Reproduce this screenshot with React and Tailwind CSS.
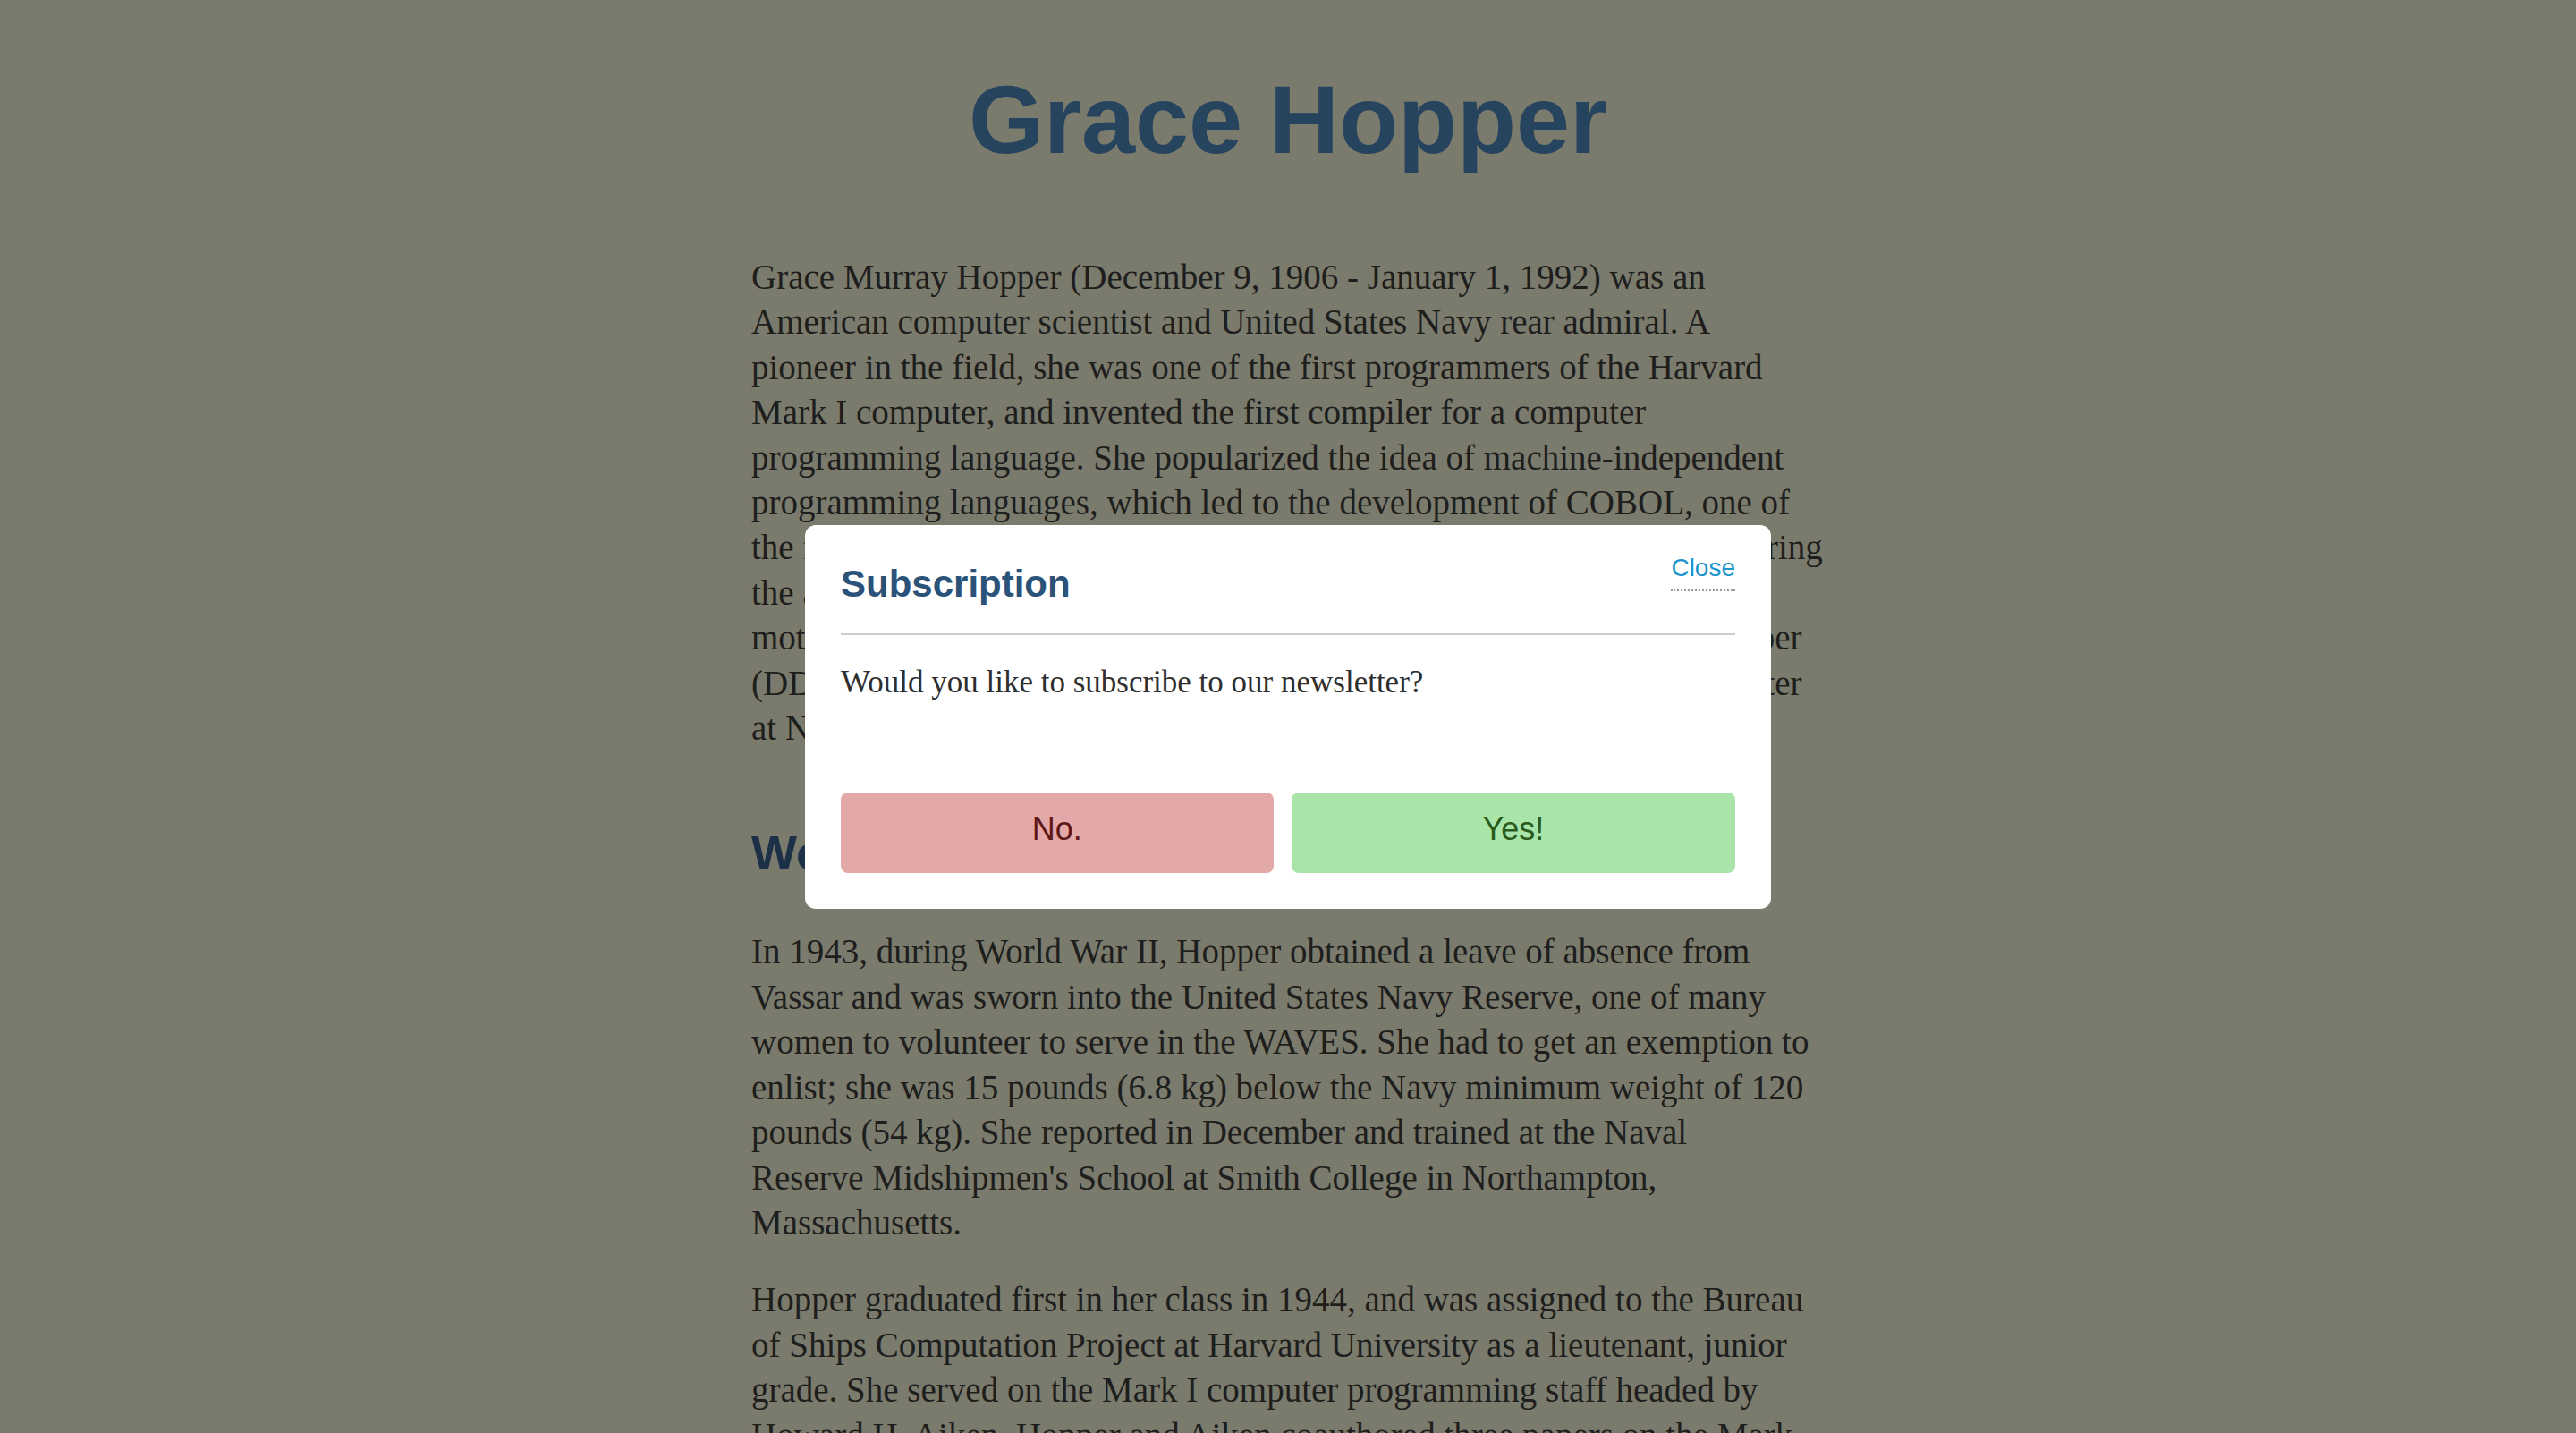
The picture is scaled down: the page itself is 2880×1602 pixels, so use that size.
import React from "react";

const p1 = [
  "Grace Murray Hopper (December 9, 1906 - January 1, 1992) was an",
  "American computer scientist and United States Navy rear admiral. A",
  "pioneer in the field, she was one of the first programmers of the Harvard",
  "Mark I computer, and invented the first compiler for a computer",
  "programming language. She popularized the idea of machine-independent",
  "programming languages, which led to the development of COBOL, one of",
  "the first high-level programming languages. Owing to her several pioneering",
  "the achievements and her naval rank, she is called \u201cAmazing Grace\u201d.",
  "motto is well known. The U.S. Navy guided-missile destroyer USS Hopper",
  "(DDG-70) was named for her, as was the Cray XE6 Hopper supercomputer",
  "at NERSC.",
];

const p2 = [
  "In 1943, during World War II, Hopper obtained a leave of absence from",
  "Vassar and was sworn into the United States Navy Reserve, one of many",
  "women to volunteer to serve in the WAVES. She had to get an exemption to",
  "enlist; she was 15 pounds (6.8 kg) below the Navy minimum weight of 120",
  "pounds (54 kg). She reported in December and trained at the Naval",
  "Reserve Midshipmen's School at Smith College in Northampton,",
  "Massachusetts.",
];

const p3 = [
  "Hopper graduated first in her class in 1944, and was assigned to the Bureau",
  "of Ships Computation Project at Harvard University as a lieutenant, junior",
  "grade. She served on the Mark I computer programming staff headed by",
  "Howard H. Aiken. Hopper and Aiken coauthored three papers on the Mark",
  "I, also known as the Automatic Sequence Controlled Calculator.",
];

function Para({ lines, className }) {
  return (
    <p
      className={
        "text-[39px] leading-[50.4px] text-[#1e1e1c] [font-family:'Liberation_Serif',serif] " +
        className
      }
    >
      {lines.map((l, i) => (
        <span key={i} className="block whitespace-nowrap">
          {l}
        </span>
      ))}
    </p>
  );
}

export default function App() {
  return (
    <div className="relative min-h-screen w-full bg-[#7a7a6d] pb-[200px]">
      <main className="mx-auto w-[1200px]">
        <h1 className="m-0 pt-[72px] text-center text-[108px] font-bold leading-[124px] text-[#27445f] [font-family:'Liberation_Sans',Arial,sans-serif]">
          Grace Hopper
        </h1>
        <Para lines={p1} className="mt-[89px]" />
        <h2 className="mt-[83px] text-[54px] font-bold leading-[62px] text-[#1c3047] [font-family:'Liberation_Sans',Arial,sans-serif]">
          World War II
        </h2>
        <Para lines={p2} className="mt-[55px]" />
        <Para lines={p3} className="mt-[36px]" />
      </main>

      <div
        role="dialog"
        className="absolute left-1/2 top-[587px] w-[1080px] -translate-x-1/2 rounded-[12px] bg-white p-[40px]"
      >
        <div className="flex items-start justify-between border-b-2 border-[#cccccc] pb-[30px]">
          <h2 className="mt-[1px] text-[42px] font-bold leading-[50px] text-[#2b5279] [font-family:'Liberation_Sans',Arial,sans-serif]">
            Subscription
          </h2>
          <button className="-mt-[8px] border-b-2 border-dotted border-[#9a9a9a] pb-[8px] text-[28px] leading-[32px] text-[#1a95cc] [font-family:'Liberation_Sans',Arial,sans-serif]">
            Close
          </button>
        </div>
        <p className="mt-[28px] text-[35px] leading-[49px] text-[#2e2e2e] [font-family:'Liberation_Serif',serif]">
          Would you like to subscribe to our newsletter?
        </p>
        <div className="mt-[99px] flex gap-[20px]">
          <button className="flex h-[90px] flex-auto items-center justify-center rounded-[8px] bg-[#e3a9a9] pb-[9px] text-[36px] text-[#5f1717] [font-family:'Liberation_Sans',Arial,sans-serif]">
            No.
          </button>
          <button className="flex h-[90px] flex-auto items-center justify-center rounded-[8px] bg-[#a9e5a9] pb-[9px] text-[36px] text-[#2b5b1b] [font-family:'Liberation_Sans',Arial,sans-serif]">
            Yes!
          </button>
        </div>
      </div>
    </div>
  );
}
